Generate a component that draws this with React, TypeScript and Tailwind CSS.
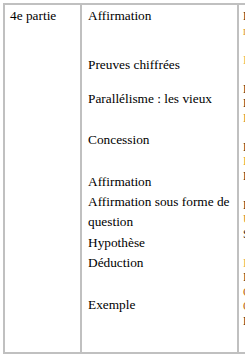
import React from "react";

const RIGHT_LINES = [
	{ t: "Les", c: "text-[#3a2a10]" },
	{ t: "ne", c: "text-[#e0a030]" },
	{ t: "", c: "" },
	{ t: "Ils", c: "text-[#e8b050]" },
	{ t: "", c: "" },
	{ t: "Le", c: "text-[#3a2a10]" },
	{ t: "En", c: "text-[#3a2a10]" },
	{ t: "De", c: "text-[#d09030]" },
	{ t: "", c: "" },
	{ t: "La", c: "text-[#3a2a10]" },
	{ t: "Il", c: "text-[#e0a030]" },
	{ t: "Le", c: "text-[#3a2a10]" },
	{ t: "", c: "" },
	{ t: "Et", c: "text-[#3a2a10]" },
	{ t: "Un", c: "text-[#d09030]" },
	{ t: "Si", c: "text-[#3a2a10]" },
	{ t: "", c: "" },
	{ t: "Le", c: "text-[#e8b050]" },
	{ t: "Il", c: "text-[#3a2a10]" },
	{ t: "Ce", c: "text-[#c07020]" },
	{ t: "On", c: "text-[#c07020]" },
	{ t: "Le", c: "text-[#3a2a10]" },
	{ t: "", c: "" },
];

export default function App() {
	return (
		<div className="w-[245px] h-[362px] overflow-hidden bg-white font-[family-name:Liberation_Serif,serif] text-[13.33px] leading-[20px] text-black">
			<div className="ml-[3px] mt-[3px] w-[320px] h-[351px] border-2 border-[#c0c0c0] flex">
				{/* first column */}
				<div className="w-[75px] shrink-0 pl-[5px] pt-px">4e partie</div>

				{/* second column */}
				<div className="w-[159px] shrink-0 border-x-2 border-[#c0c0c0] pl-[6px] pt-px flex flex-col">
					<p>Affirmation</p>
					<p className="mt-[29px]">Preuves chiffrées</p>
					<p className="mt-[14px]">Parallélisme : les vieux</p>
					<p className="mt-[21px]">Concession</p>
					<p className="mt-[22px]">Affirmation</p>
					<p>Affirmation sous forme de</p>
					<p>question</p>
					<p className="mt-px">Hypothèse</p>
					<p>Déduction</p>
					<p className="mt-[22px]">Exemple</p>
				</div>

				{/* third column, cut off by the window */}
				<div className="pl-[4px] pt-[4px] flex flex-col text-[12px] leading-[14.5px] whitespace-nowrap">
					{RIGHT_LINES.map((l, i) => (
						<span key={i} className={l.c}>
							{l.t || "\u00a0"}
						</span>
					))}
				</div>
			</div>
		</div>
	);
}
